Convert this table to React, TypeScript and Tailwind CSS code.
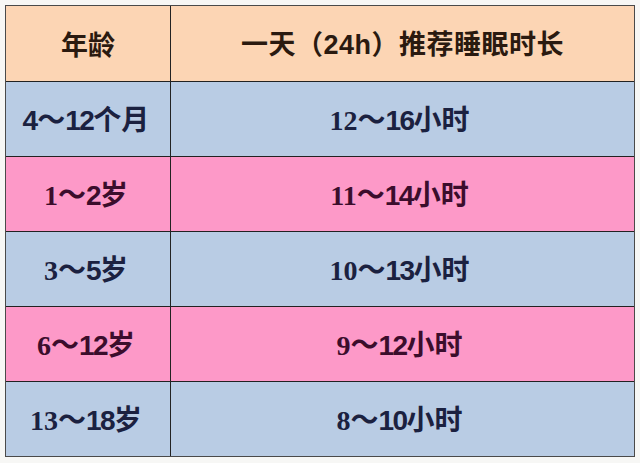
const rows = [
  { a: ["4", "12", "个月"], b: ["12", "16"], bg: "bg-[#b9cce4]", text: "text-[#1b2140]", sansFirst: true },
  { a: ["1", "2", "岁"], b: ["11", "14"], bg: "bg-[#fd99c8]", text: "text-[#3b0d2c]" },
  { a: ["3", "5", "岁"], b: ["10", "13"], bg: "bg-[#b9cce4]", text: "text-[#1b2140]" },
  { a: ["6", "12", "岁"], b: ["9", "12"], bg: "bg-[#fd99c8]", text: "text-[#3b0d2c]" },
  { a: ["13", "18", "岁"], b: ["8", "10"], bg: "bg-[#b9cce4]", text: "text-[#1b2140]" },
];

const serif = "font-['Liberation_Serif','Noto_Sans_CJK_SC',serif]";
const sans = "font-['Liberation_Sans','Noto_Sans_CJK_SC',sans-serif]";
const cjk = "font-['Noto_Sans_CJK_SC',sans-serif]";

function Range({ parts, unit, sansFirst }: { parts: string[]; unit: string; sansFirst?: boolean }) {
  return (
    <span className="flex items-baseline text-[28px] leading-none">
      <span className={sansFirst ? `${sans} font-bold tracking-[-1px]` : `${serif} font-semibold`}>{parts[0]}</span>
      <span className={`${serif} font-bold`}>～</span>
      <span className={`${sans} font-bold tracking-[-1.5px]`}>{parts[1]}</span>
      <span className={`${cjk} font-bold`}>{unit}</span>
    </span>
  );
}

export default function App() {
  return (
    <div className="w-[640px] h-[463px] bg-[#f7f7f5] pt-[5px] pl-[5px]">
      <div className="w-[630px] border-[1.5px] border-[#4a4a4a]">
        <div className="grid grid-cols-[165px_1fr] h-[75px] bg-[#fcd5b4] text-[#2a1a10]">
          <div className="flex items-center justify-center border-r border-[#222] pt-[2px]">
            <span className={`${cjk} font-bold text-[27px]`}>年龄</span>
          </div>
          <div className="flex items-center justify-center pt-[2px]">
            <span className={`${cjk} font-bold text-[27px] tracking-[0.5px]`}>
              一天（<span className={`${sans} font-bold`}>24h</span>）推荐睡眠时长
            </span>
          </div>
        </div>
        {rows.map((r, i) => (
          <div key={i} className={`grid grid-cols-[165px_1fr] h-[75px] border-t border-[#222] ${r.bg} ${r.text}`}>
            <div className="flex items-center justify-center border-r border-[#222] pr-[4px]">
              <Range parts={r.a.slice(0, 2)} unit={r.a[2]} sansFirst={r.sansFirst} />
            </div>
            <div className="flex items-center justify-center pr-[6px]">
              <Range parts={r.b} unit="小时" />
            </div>
          </div>
        ))}
      </div>
    </div>
  );
}
